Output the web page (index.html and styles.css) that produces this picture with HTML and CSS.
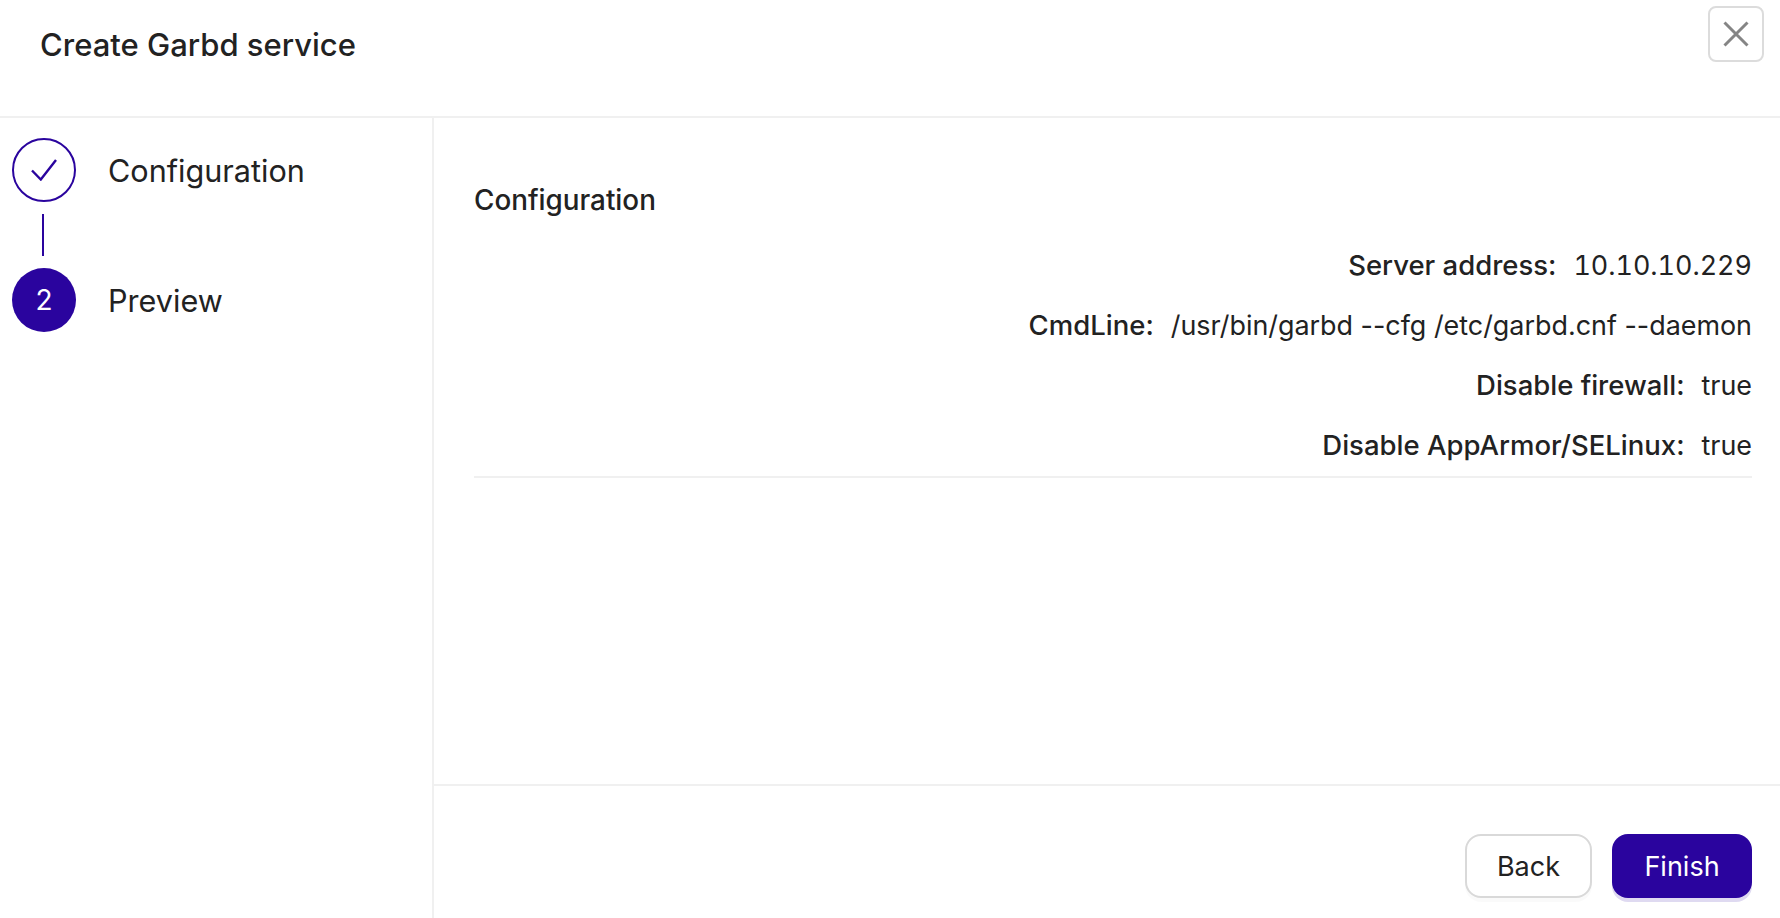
FILE: index.html
```html
<!DOCTYPE html>
<html lang="en">
<head>
<meta charset="utf-8">
<title>Create Garbd service</title>
<link rel="stylesheet" href="styles.css">
</head>
<body>
<div class="drawer">
  <header class="head">
    <h1 class="title">Create Garbd service</h1>
    <button class="close" aria-label="Close">
      <svg viewBox="0 0 28 28" width="28" height="28"><path d="M2.5 2.5 25.500 25.500M25.500 2.500 2.500 25.500" fill="none" stroke="#858585" stroke-width="3"/></svg>
    </button>
  </header>
  <div class="body">
    <aside class="steps">
      <div class="step">
        <span class="dot dot-done">
          <svg viewBox="0 0 26 22" width="26" height="22"><path d="M1 11.500 9.800 20.500 25 1" fill="none" stroke="#2a049e" stroke-width="2.400"/></svg>
        </span>
        <span class="step-label">Configuration</span>
      </div>
      <div class="connector"></div>
      <div class="step">
        <span class="dot dot-active">2</span>
        <span class="step-label">Preview</span>
      </div>
    </aside>
    <main class="main">
      <section class="content">
        <h2 class="section">Configuration</h2>
        <dl class="rows">
          <div class="row"><dt>Server address:</dt><dd class="num">10.10.10.229</dd></div>
          <div class="row"><dt>CmdLine:</dt><dd>/usr/bin/garbd --cfg /etc/garbd.cnf --daemon</dd></div>
          <div class="row"><dt>Disable firewall:</dt><dd>true</dd></div>
          <div class="row"><dt>Disable AppArmor/SELinux:</dt><dd>true</dd></div>
        </dl>
      </section>
      <footer class="foot">
        <button class="btn btn-back">Back</button>
        <button class="btn btn-finish">Finish</button>
      </footer>
    </main>
  </div>
</div>
</body>
</html>
```
FILE: styles.css
```css
* { box-sizing: border-box; }
html, body { margin: 0; height: 100%; }
body { background: #fff; color: #222; font-family: Inter, "Liberation Sans", sans-serif; overflow: hidden; }
.drawer { display: flex; flex-direction: column; height: 918px; }
.head { height: 118px; flex: none; border-bottom: 2px solid #f0f0f0; display: flex; justify-content: space-between; align-items: flex-start; padding: 6px 16px 0 40px; }
.title { margin: 16px 0 0; font-size: 31px; line-height: 46px; font-weight: 450; letter-spacing: 0; }
.close { width: 56px; height: 56px; padding: 0; border: 2px solid #dcdcdc; border-radius: 8px; background: #fff; display: flex; align-items: center; justify-content: center; }
.body { flex: 1; display: flex; min-height: 0; }
.steps { width: 434px; flex: none; border-right: 2px solid #f0f0f0; padding: 20px 0 0 12px; }
.step { display: flex; align-items: center; height: 64px; }
.dot { width: 64px; height: 64px; border-radius: 50%; flex: none; display: flex; align-items: center; justify-content: center; font-size: 28px; }
.dot-done { border: 2px solid #2a049e; }
.dot-active { background: #2a049e; color: #fff; }
.step-label { margin-left: 32px; font-size: 30.6px; line-height: 46px; color: #222; position: relative; top: 1px; }
.connector { width: 2px; height: 42px; background: #2a049e; margin: 12px 0 12px 30px; }
.main { flex: 1; display: flex; flex-direction: column; min-width: 0; }
.content { height: 668px; flex: none; border-bottom: 2px solid #f0f0f0; padding: 62px 28px 0 40px; }
.section { margin: 0 0 25px; font-size: 27.8px; line-height: 40px; font-weight: 450; }
.rows { margin: 0; border-bottom: 2px solid #f0f0f0; padding-bottom: 11px; }
.row { display: flex; justify-content: flex-end; align-items: baseline; font-size: 27.5px; line-height: 40px; margin-bottom: 20px; }
.row:last-child { margin-bottom: 0; }
.row dt { font-weight: 450; margin-right: 17px; }
.row dd { margin: 0; font-size: 26.9px; }
.row .num { font-variant-numeric: tabular-nums; font-feature-settings: "tnum"; }
.foot { flex: 1; display: flex; justify-content: flex-end; gap: 20px; padding: 48px 28px 0 0; }
.btn { height: 64px; border-radius: 16px; font: 400 27px Inter, "Liberation Sans", sans-serif; padding: 0; }
.btn-back { width: 127px; background: #fff; color: #222; border: 2px solid #d9d9d9; box-shadow: 0 4px 0 rgba(0,0,0,.02); }
.btn-finish { width: 140px; background: #2a049e; color: #fff; border: 0; box-shadow: 0 4px 0 rgba(42,4,158,.15); }
```
